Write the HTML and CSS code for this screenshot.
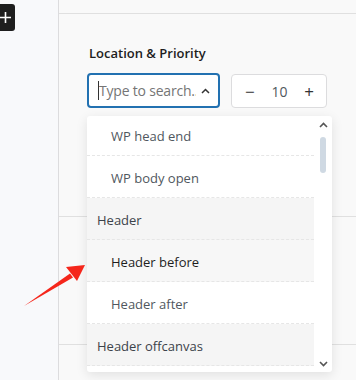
FILE: index.html
```html
<!DOCTYPE html>
<html>

<head>
    <meta charset="utf-8" />
    <title>Location &amp; Priority</title>
    <link rel="stylesheet" href="styles.css">
</head>

<body>
    <div class="sidebar">
        <div class="add-btn">
            <svg width="11" height="11" viewBox="0 0 11 11"><path d="M5.5 0v11M0 5.5h11" stroke="#fff" stroke-width="1.6" /></svg>
        </div>
    </div>
    <div class="main">
        <div class="topbar"></div>
        <div class="panel first">
            <div class="label">Location &amp; Priority</div>
            <div class="row">
                <div class="field">
                    <div class="select">
                        <span class="caret"></span>
                        <span class="placeholder">Type to search..</span>
                        <svg class="chev" width="9" height="6" viewBox="0 0 9 6"><path d="M1 5l3.5-3.5L8 5" fill="none" stroke="#333" stroke-width="1.5" /></svg>
                    </div>
                    <div class="dropdown">
                        <div class="options">
                            <div class="list">
                                <div class="opt">WP head end</div>
                                <div class="opt">WP body open</div>
                                <div class="group">Header</div>
                                <div class="opt hover">Header before</div>
                                <div class="opt">Header after</div>
                                <div class="group">Header offcanvas</div>
                            </div>
                        </div>
                        <div class="scroll">
                            <svg width="9" height="6" viewBox="0 0 9 6"><path d="M1 5l3.5-3.5L8 5" fill="none" stroke="#555" stroke-width="1.6" /></svg>
                            <div class="track"><div class="thumb"></div></div>
                            <svg width="9" height="6" viewBox="0 0 9 6"><path d="M1 1l3.5 3.5L8 1" fill="none" stroke="#555" stroke-width="1.6" /></svg>
                        </div>
                    </div>
                </div>
                <div class="number">
                    <span class="step">&minus;</span>
                    <span class="value">10</span>
                    <span class="step">+</span>
                </div>
            </div>
        </div>
        <div class="panel"></div>
        <div class="panel last"></div>
    </div>
    <svg class="pointer" width="70" height="60" viewBox="0 0 70 60">
        <path d="M2 56L48 23.5L51 27.5Z" fill="#f5261b" />
        <path d="M63 15L44 17L55 31Z" fill="#f5261b" />
    </svg>
</body>

</html>
```

FILE: styles.css
```css
* {
    margin: 0;
    padding: 0;
    box-sizing: border-box;
}

body {
    display: flex;
    height: 380px;
    overflow: hidden;
    background-color: #f9f9f9;
    font-family: "Open Sans", "Noto Sans", sans-serif;
    color: #3c434a;
}

.sidebar {
    width: 59px;
    flex-shrink: 0;
    border-right: 1px solid #dcdcde;
    background-color: #f8f9fb;
    padding-top: 4px;
}

.add-btn {
    width: 15px;
    height: 27px;
    background-color: #1e1e1e;
    border-radius: 0 3px 3px 0;
    display: flex;
    align-items: center;
    justify-content: flex-start;
}

.main {
    flex: 1;
    display: flex;
    flex-direction: column;
}

.topbar,
.panel {
    flex-shrink: 0;
}

.topbar {
    height: 14px;
    border-bottom: 1px solid #e0e0e0;
}

.panel {
    height: 128px;
    border-bottom: 1px solid #e0e0e0;
}

.panel.first {
    height: 203px;
    padding: 29px 0 0 28px;
}

.panel.last {
    flex: 1;
    height: auto;
    border-bottom: none;
}

.label {
    font-size: 13px;
    font-weight: 600;
    line-height: 20px;
    color: #1e1e1e;
    padding-left: 2px;
    margin-bottom: 10px;
}

.row {
    display: flex;
    align-items: flex-start;
    gap: 11px;
}

.field {
    position: relative;
}

.select {
    width: 133px;
    height: 35px;
    border: 2px solid #2271b1;
    border-radius: 4px;
    background-color: #fff;
    display: flex;
    align-items: center;
    padding: 0 8px 0 9px;
}

.caret {
    width: 1px;
    height: 19px;
    background-color: #333;
}

.placeholder {
    font-size: 14px;
    color: #757575;
    white-space: nowrap;
    overflow: hidden;
    flex: 1;
    letter-spacing: -0.2px;
}

.chev {
    margin-left: 5px;
    flex-shrink: 0;
}

.number {
    width: 96px;
    height: 34px;
    margin-top: 1px;
    border: 1px solid #dcdcde;
    border-radius: 4px;
    background-color: #fff;
    display: flex;
    align-items: center;
    justify-content: space-between;
    padding: 0 12px 0 13px;
    font-size: 14px;
    color: #50575e;
}

.step {
    font-size: 17px;
    color: #333;
}

.dropdown {
    position: absolute;
    top: 43px;
    left: 0;
    width: 245px;
    height: 256px;
    background-color: #fff;
    border-radius: 3px;
    box-shadow: 0 3px 12px rgba(0, 0, 0, 0.1);
    display: flex;
    z-index: 2;
}

.options {
    width: 227px;
    overflow: hidden;
}

.list {
    margin-top: -2px;
}

.opt,
.group {
    height: 42px;
    display: flex;
    align-items: center;
    padding-top: 2px;
    font-size: 13px;
    border-bottom: 1px dashed #e6e6e6;
    white-space: nowrap;
}

.opt {
    padding-left: 24px;
    color: #50575e;
}

.opt.hover {
    background-color: #f7f7f7;
    color: #1e1e1e;
}

.group {
    padding-left: 10px;
    background-color: #f5f5f5;
    color: #3c434a;
    font-weight: 500;
}

.scroll {
    flex: 1;
    display: flex;
    flex-direction: column;
    align-items: center;
    padding: 6px 0 5px;
}

.track {
    flex: 1;
    width: 100%;
    display: flex;
    justify-content: center;
    padding-top: 9px;
}

.thumb {
    width: 6px;
    height: 36px;
    border-radius: 3px;
    background-color: #cfd9e3;
}

.pointer {
    position: absolute;
    left: 22px;
    top: 250px;
    z-index: 3;
}
```
